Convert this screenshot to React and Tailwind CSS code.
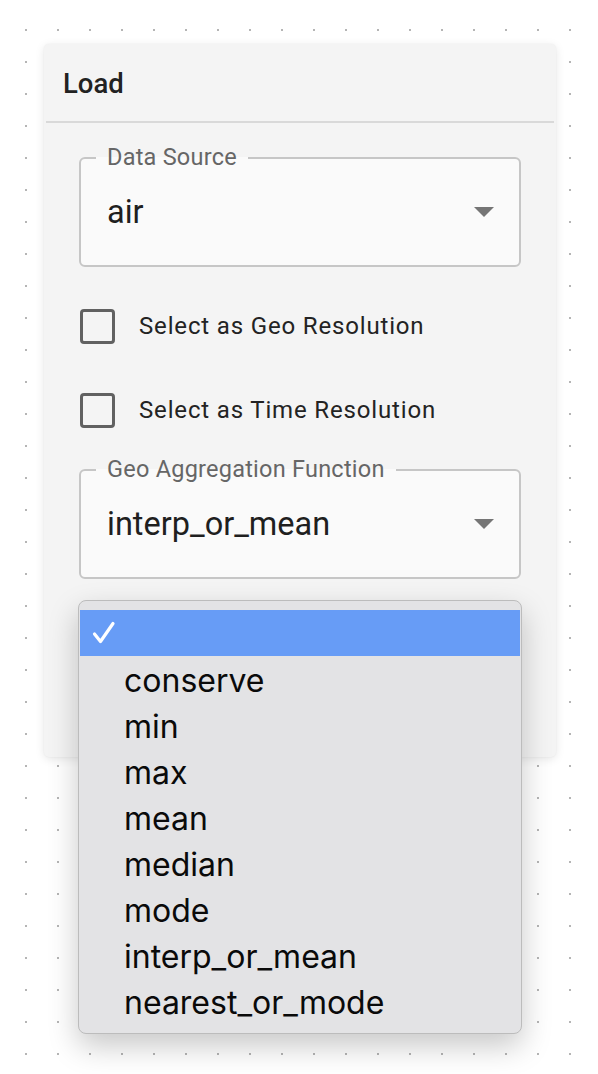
import React from "react";

const roboto = { fontFamily: "Roboto, 'Noto Sans', sans-serif" };

function SelectField({ label, value }) {
  return (
    <div className="relative mx-[35px] h-[110px] rounded-[6px] border-2 border-[#c6c6c6] bg-[#fafafa] flex items-center pl-[26px] pr-[25px]">
      <span className="absolute left-[15px] top-[-16px] px-[11px] text-[23.5px] leading-[28px] tracking-[0.01em] text-[#666] bg-[linear-gradient(to_bottom,#f4f4f4_50%,#fafafa_50%)] font-['Roboto',sans-serif]">
        {label}
      </span>
      <span className="flex-1 text-[32.5px] leading-[40px] text-[#1f1f1f] font-['Roboto',sans-serif]">{value}</span>
      <svg width="20" height="10" viewBox="0 0 20 10" className="shrink-0">
        <path d="M0 0 L20 0 L10 10 Z" fill="#757575" />
      </svg>
    </div>
  );
}

function CheckRow({ label }) {
  return (
    <div className="h-[84px] flex items-center pl-[36px]">
      <div className="w-[35px] h-[35px] rounded-[4px] border-[3px] border-[#616161] shrink-0" />
      <span className="ml-[24px] text-[24px] tracking-[0.035em] text-[#232323] font-['Roboto',sans-serif]">{label}</span>
    </div>
  );
}

const options = ["conserve", "min", "max", "mean", "median", "mode", "interp_or_mean", "nearest_or_mode"];

export default function App() {
  return (
    <div
      className="relative w-[598px] h-[1074px] overflow-hidden bg-white bg-[radial-gradient(circle,#b5b5b5_0.9px,transparent_1.3px)] bg-[length:32px_32px] bg-[position:10px_14px] pt-[44px] pl-[44px]"
      style={roboto}
    >
      <div className="w-[512px] h-[713px] rounded-[5px] bg-[#f4f4f4] shadow-[0_2px_10px_rgba(0,0,0,0.10),0_0_2px_rgba(0,0,0,0.06)]">
        <div className="h-[77px] flex items-end pb-[22px] pl-[19px]">
          <span className="text-[27.5px] leading-[30px] font-medium text-[#222] font-['Roboto',sans-serif]">Load</span>
        </div>
        <div className="mx-[2px] h-[2px] bg-[#d9d9d9]" />
        <div className="pt-[34px]">
          <SelectField label="Data Source" value="air" />
          <div className="mt-[17px]">
            <CheckRow label="Select as Geo Resolution" />
            <CheckRow label="Select as Time Resolution" />
          </div>
          <div className="mt-[17px]">
            <SelectField label="Geo Aggregation Function" value="interp_or_mean" />
          </div>
        </div>
      </div>

      <div className="absolute left-[78px] top-[600px] w-[444px] h-[434px] rounded-[8px] border border-[#bcbcbc] bg-[#e3e3e5] shadow-[0_12px_30px_rgba(0,0,0,0.22)] pt-[9px] px-[1px] font-['Inter',sans-serif]">
        <div className="h-[46px] bg-[#679cf6] flex items-center pl-[12px]">
          <svg width="24" height="24" viewBox="0 0 24 24">
            <path d="M2.5 13 L8.5 20.5 L21 2.5" fill="none" stroke="#fff" strokeWidth="3.2" strokeLinecap="round" strokeLinejoin="round" />
          </svg>
        </div>
        {options.map((o) => (
          <div key={o} className="h-[46px] flex items-center pt-[3px] pl-[44px] text-[32px] leading-[43px] text-[#0a0a0a]">
            {o}
          </div>
        ))}
      </div>
    </div>
  );
}
